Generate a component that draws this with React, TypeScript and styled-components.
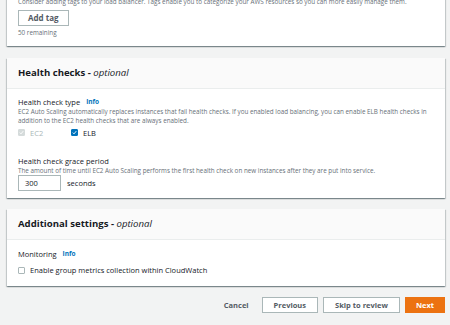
import React from 'react';
import styled, { createGlobalStyle } from 'styled-components';

const GlobalStyle = createGlobalStyle`
  html, body {
    margin: 0;
    padding: 0;
    background: #f2f3f3;
    overflow: hidden;
  }
  body {
    font-family: "Open Sans", "Noto Sans", Arial, sans-serif;
    color: #16191f;
  }
`;

const Page = styled.div`
  width: 450px;
  height: 325px;
  box-sizing: border-box;
  padding: 0 5px 0 7px;
  display: flex;
  flex-direction: column;
`;

const Panel = styled.section<{ $cut?: number }>`
  background: #fff;
  margin-top: ${(p) => (p.$cut ? `-${p.$cut}px` : '11.5px')};
  box-shadow: 0 1px 1px 0 rgba(0, 28, 36, 0.3), 1px 1px 1px 0 rgba(0, 28, 36, 0.15),
    -1px 1px 1px 0 rgba(0, 28, 36, 0.15);
`;

const PanelHeader = styled.div`
  height: 31px;
  box-sizing: border-box;
  background: #fafafa;
  border-bottom: 1px solid #eaeded;
  display: flex;
  align-items: center;
  padding: 0 11px;
`;

const Title = styled.h2`
  margin: 0;
  font-size: 9.6px;
  font-weight: 700;
  line-height: 14px;
  em {
    font-weight: 400;
    font-style: italic;
  }
`;

const PanelBody = styled.div<{ $top: number; $bottom: number }>`
  padding: ${(p) => p.$top}px 11px ${(p) => p.$bottom}px;
  display: flex;
  flex-direction: column;
  align-items: flex-start;
`;

const Label = styled.div<{ $gap?: number }>`
  font-size: 7.5px;
  line-height: 10px;
  margin-top: ${(p) => p.$gap ?? 0}px;
  display: flex;
  align-items: center;
  gap: 6px;
`;

const Info = styled.span`
  color: #0073bb;
  font-weight: 700;
  font-size: 6.5px;
`;

const Description = styled.div`
  font-size: 6.3px;
  line-height: 9.5px;
  color: #687078;
`;

const Hint = styled(Description)`
  margin-top: 2px;
`;

const Button = styled.button<{ $primary?: boolean }>`
  height: 16px;
  box-sizing: border-box;
  padding: 0 ${(p) => (p.$primary ? 10 : 11)}px;
  font-family: inherit;
  font-size: 7.5px;
  font-weight: 700;
  white-space: nowrap;
  border: 1px solid ${(p) => (p.$primary ? '#ec7211' : '#aab7b8')};
  background: ${(p) => (p.$primary ? '#ec7211' : '#fff')};
  color: ${(p) => (p.$primary ? '#fff' : '#545b64')};
  border-radius: 0;
  cursor: pointer;
`;

const AddTag = styled(Button)`
  margin-top: 3px;
  padding: 0 9px;
  font-size: 8px;
`;

const LinkButton = styled.button`
  background: none;
  border: none;
  padding: 0;
  font-family: inherit;
  font-size: 7.5px;
  font-weight: 700;
  color: #545b64;
  margin-right: 8px;
`;

const CheckRow = styled.div<{ $gap?: number }>`
  display: flex;
  align-items: center;
  margin-top: ${(p) => p.$gap ?? 0}px;
  height: 10px;
`;

const CheckItem = styled.label<{ $disabled?: boolean; $width?: number }>`
  display: flex;
  align-items: center;
  gap: 5px;
  width: ${(p) => (p.$width ? `${p.$width}px` : 'auto')};
  font-size: 7.5px;
  color: ${(p) => (p.$disabled ? '#aab7b8' : '#16191f')};
`;

const Box = styled.span<{ $checked?: boolean; $disabled?: boolean }>`
  width: 7px;
  height: 7px;
  box-sizing: border-box;
  display: inline-flex;
  align-items: center;
  justify-content: center;
  border: 1px solid
    ${(p) => (p.$disabled ? '#d5dbdb' : p.$checked ? '#0073bb' : '#aab7b8')};
  background: ${(p) => (p.$disabled ? '#d5dbdb' : p.$checked ? '#0073bb' : '#fff')};
  border-radius: 1px;
`;

const InputRow = styled.div`
  display: flex;
  align-items: center;
  gap: 6px;
`;

const NumberInput = styled.div`
  width: 43px;
  height: 16px;
  box-sizing: border-box;
  border: 1px solid #aab7b8;
  font-size: 7.5px;
  display: flex;
  align-items: center;
  padding-left: 6px;
`;

const Unit = styled.span`
  font-size: 7.5px;
`;

const Footer = styled.div`
  display: flex;
  justify-content: flex-end;
  align-items: center;
  gap: 5px;
  margin-top: 11px;
`;

function Check({ checked, disabled }: { checked?: boolean; disabled?: boolean }) {
  return (
    <Box $checked={checked} $disabled={disabled}>
      {checked && (
        <svg width="5" height="5" viewBox="0 0 10 10">
          <path d="M1.5 5.2 L4 7.7 L8.5 2.3" fill="none" stroke="#fff" strokeWidth="1.8" />
        </svg>
      )}
    </Box>
  );
}

export default function App() {
  return (
    <Page>
      <GlobalStyle />
      <Panel $cut={3}>
        <PanelBody $top={0} $bottom={9}>
          <Description>
            Consider adding tags to your load balancer. Tags enable you to categorize your AWS resources so you can more easily manage them.
          </Description>
          <AddTag>Add tag</AddTag>
          <Hint>50 remaining</Hint>
        </PanelBody>
      </Panel>

      <Panel>
        <PanelHeader>
          <Title>
            Health checks - <em>optional</em>
          </Title>
        </PanelHeader>
        <PanelBody $top={8} $bottom={6.5}>
          <Label>
            Health check type <Info>Info</Info>
          </Label>
          <Description>
            EC2 Auto Scaling automatically replaces instances that fail health checks. If you enabled load balancing, you can enable ELB health checks in
            addition to the EC2 health checks that are always enabled.
          </Description>
          <CheckRow $gap={2}>
            <CheckItem $disabled $width={53}>
              <Check checked disabled /> EC2
            </CheckItem>
            <CheckItem>
              <Check checked /> ELB
            </CheckItem>
          </CheckRow>
          <Label $gap={18}>Health check grace period</Label>
          <Description>
            The amount of time until EC2 Auto Scaling performs the first health check on new instances after they are put into service.
          </Description>
          <InputRow>
            <NumberInput>300</NumberInput>
            <Unit>seconds</Unit>
          </InputRow>
        </PanelBody>
      </Panel>

      <Panel>
        <PanelHeader>
          <Title>
            Additional settings - <em>optional</em>
          </Title>
        </PanelHeader>
        <PanelBody $top={9} $bottom={11}>
          <Label>
            Monitoring <Info>Info</Info>
          </Label>
          <CheckRow $gap={6}>
            <CheckItem>
              <Check /> Enable group metrics collection within CloudWatch
            </CheckItem>
          </CheckRow>
        </PanelBody>
      </Panel>

      <Footer>
        <LinkButton>Cancel</LinkButton>
        <Button>Previous</Button>
        <Button>Skip to review</Button>
        <Button $primary>Next</Button>
      </Footer>
    </Page>
  );
}
